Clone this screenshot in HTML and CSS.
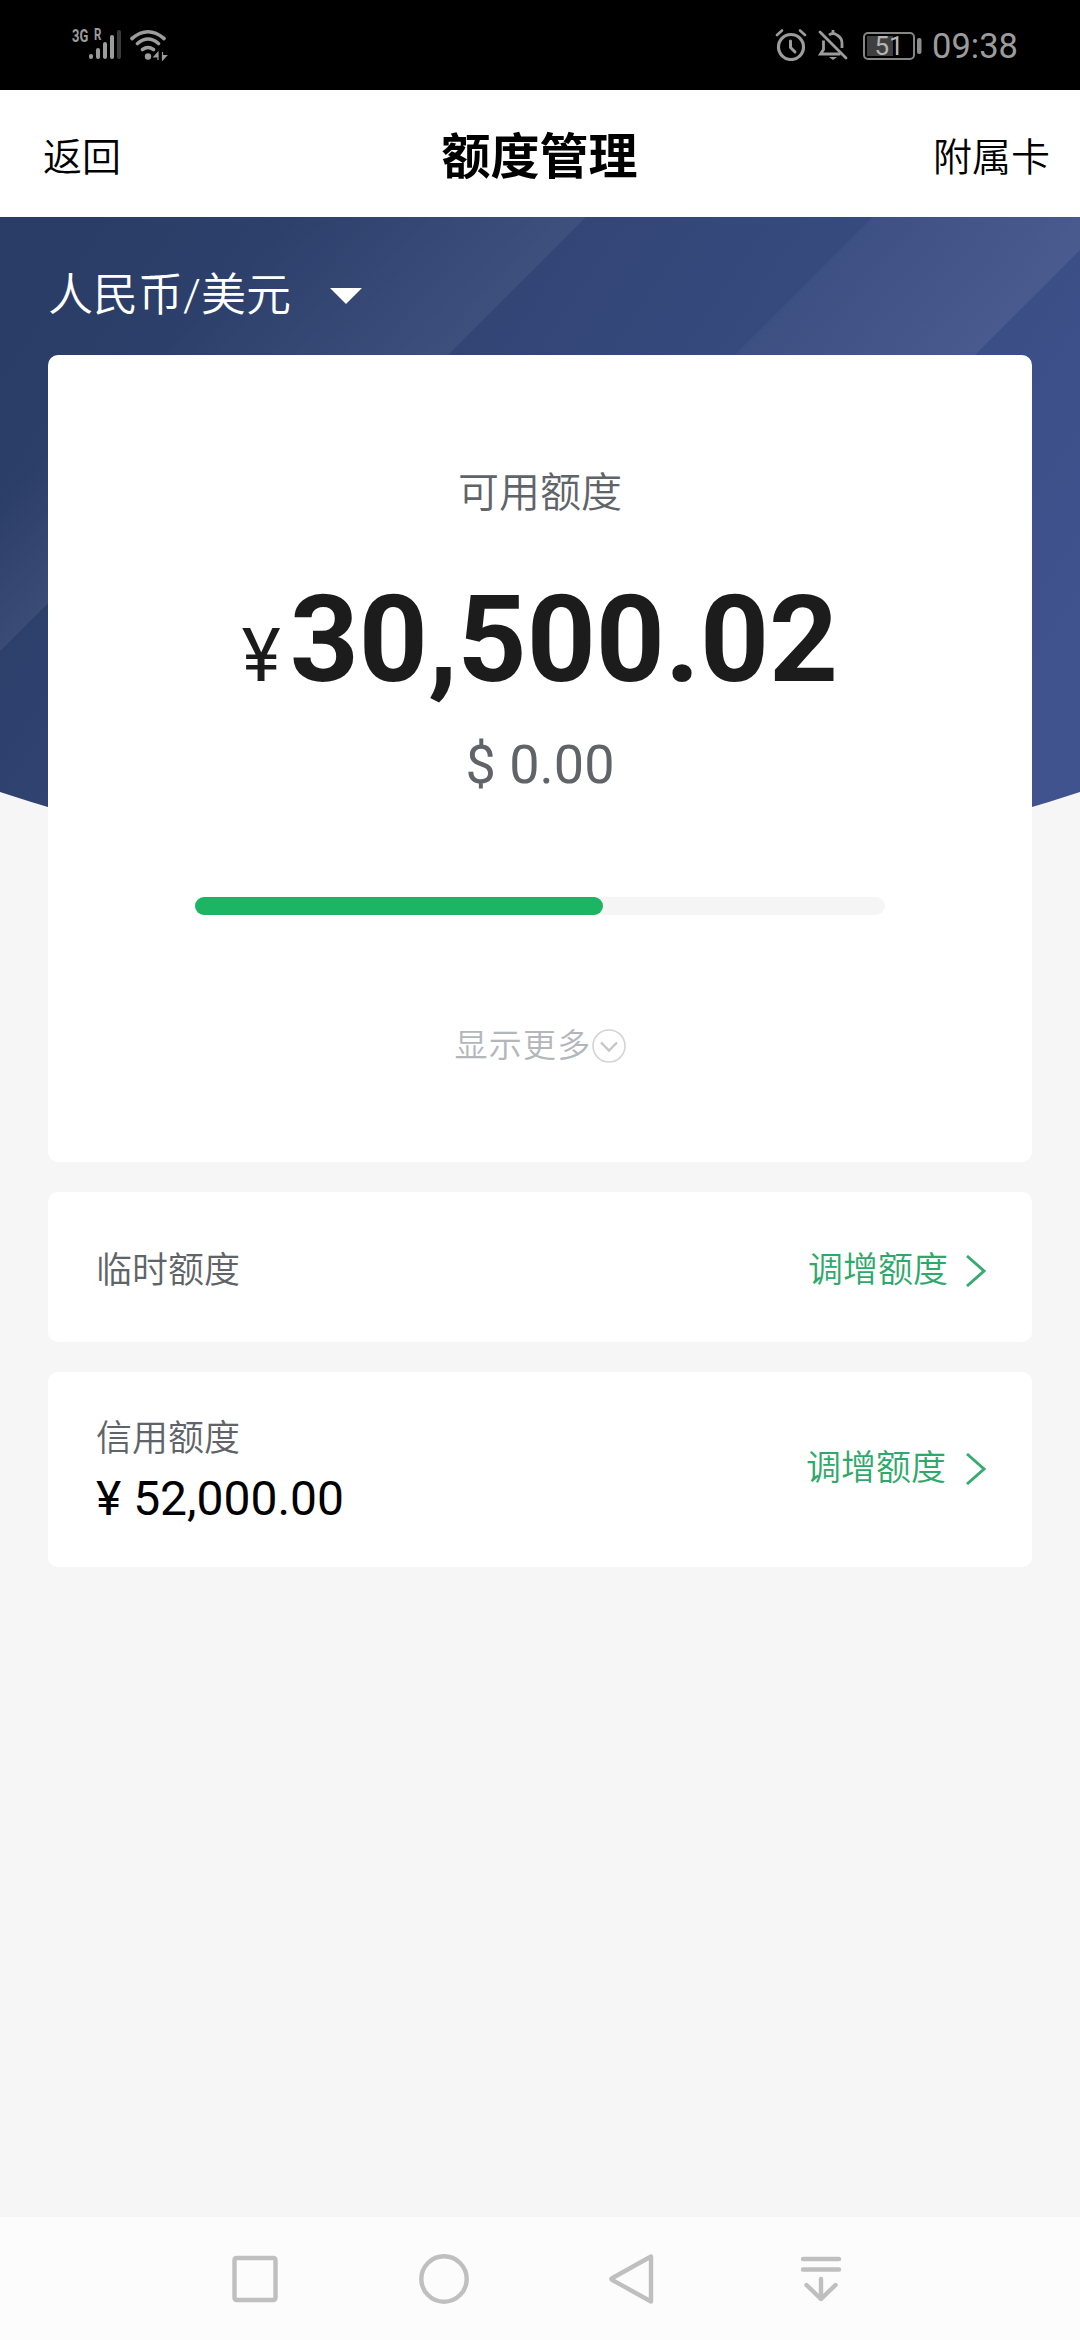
FILE: index.html
```html
<!DOCTYPE html>
<html lang="zh-CN">
<head>
<meta charset="utf-8">
<title>额度管理</title>
<link rel="stylesheet" href="styles.css">
</head>
<body>
<div class="status">
  <div class="status-left">
    <div class="net"><span>3G</span><span class="net-r">R</span></div>
    <svg class="bars" width="34" height="32" viewBox="16 0 34 32">
      <g stroke="#9c9c9c" stroke-width="4" stroke-linecap="round">
        <path d="M19 27v1M26 21v7M33 15v13M40 8v20"/>
        <path d="M47 3v25" stroke="#3a3a3a"/>
      </g>
    </svg>
    <svg class="wifi" width="38" height="32" viewBox="0 0 38 32">
      <g fill="none" stroke="#9c9c9c" stroke-width="3.6" stroke-linecap="round">
        <path d="M2 9.500Q18-4 34 9.500M7.500 14.500Q18 5.500 28.500 14.500M12.500 20.500Q18 16.500 23.500 20.500"/>
      </g>
      <circle cx="18" cy="27.500" r="3.200" fill="#9c9c9c"/>
      <path d="M28 23v8M28 23.500l-4 4.500h4zM32.500 23v8l4-4.500h-4z" fill="#9c9c9c" stroke="#9c9c9c" stroke-width="1.200"/>
    </svg>
  </div>
  <div class="status-right">
    <svg width="32" height="32" viewBox="0 0 32 32" fill="none" stroke="#9c9c9c" stroke-linecap="round">
      <circle cx="16" cy="18" r="12.500" stroke-width="3.200"/>
      <path d="M15.500 12v6.500l4.500 4.500" stroke-width="3"/>
      <path d="M2 6l5-4.500M30 6l-5-4.500" stroke-width="2.600"/>
    </svg>
    <svg class="bell" width="30" height="32" viewBox="0 0 30 32" fill="none" stroke="#9c9c9c" stroke-width="2.800">
      <path d="M2 3l26 26" stroke-linecap="round"/>
      <path d="M11 6q4-3 8 0q5 3 5 8v5M5.500 11.500v9l-3 4.500h20M15 1v3"/>
      <path d="M11 28h8l-4 3z" fill="#9c9c9c" stroke="none"/>
    </svg>
    <svg class="battery" width="59" height="28" viewBox="0 0 59 28">
      <rect x="1" y="1" width="50" height="26" rx="4" fill="none" stroke="#858585" stroke-width="2"/>
      <rect x="4" y="4" width="26" height="20" fill="#3f3f3f"/>
      <rect x="54" y="6" width="4.500" height="16" rx="2" fill="#8c8c8c"/>
      <text class="pct" x="11.500" y="22.500">51</text>
    </svg>
    <span class="clock">09:38</span>
  </div>
</div>
<header class="topbar">
  <span class="side">返回</span>
  <h1 class="title">额度管理</h1>
  <span class="side side-right">附属卡</span>
</header>
<main class="page">
  <svg class="hero" width="1080" height="660" viewBox="0 217 1080 660" preserveAspectRatio="none">
    <defs>
      <linearGradient id="base" gradientUnits="userSpaceOnUse" x1="100" y1="217" x2="980" y2="800"><stop offset="0" stop-color="#2a3d66"/><stop offset="1" stop-color="#40538f"/></linearGradient>
      <linearGradient id="b1" gradientUnits="userSpaceOnUse" x1="290" y1="217" x2="474" y2="401"><stop offset="0" stop-color="#fff" stop-opacity="0"/><stop offset="1" stop-color="#fff" stop-opacity=".07"/></linearGradient>
      <linearGradient id="b2" gradientUnits="userSpaceOnUse" x1="871" y1="217" x2="991" y2="337"><stop offset="0" stop-color="#fff" stop-opacity=".035"/><stop offset="1" stop-color="#fff" stop-opacity=".07"/></linearGradient>
      <linearGradient id="b3" gradientUnits="userSpaceOnUse" x1="-60" y1="560" x2="25" y2="645"><stop offset="0" stop-color="#fff" stop-opacity="0"/><stop offset="1" stop-color="#fff" stop-opacity=".07"/></linearGradient>
      <clipPath id="curve"><path d="M0 217H1080V792Q540 970 0 792Z"/></clipPath>
    </defs>
    <g clip-path="url(#curve)">
      <path d="M0 217h1080v660H0z" fill="url(#base)"/>
      <path d="M0 217H586L446 357H0z" fill="url(#b1)"/>
      <path d="M873 217h207v33L973 357H733z" fill="url(#b2)"/>
      <path d="M0 357h48v246L0 651z" fill="url(#b3)"/>
    </g>
  </svg>
  <div class="currency">
    <span>人民币/美元</span>
    <svg width="32" height="16" viewBox="0 0 32 16"><path d="M0 0h32L16 16z" fill="#fff"/></svg>
  </div>
  <section class="card summary">
    <div class="label">可用额度</div>
    <div class="amount"><span class="yen">¥</span><span class="num">30,500.02</span></div>
    <div class="usd">$ 0.00</div>
    <div class="track"><div class="fill" style="width:59.1%"></div></div>
    <div class="more"><span>显示更多</span>
      <svg width="34" height="34" viewBox="0 0 34 34" fill="none"><circle cx="17" cy="17" r="16" stroke="#d3d4d5" stroke-width="1.600"/><path d="M9 13.500l8 8 8-8" stroke="#c4c6c8" stroke-width="2.400"/></svg>
    </div>
  </section>
  <section class="card row temp">
    <span class="name">临时额度</span>
    <span class="action">调增额度<svg width="21" height="32" viewBox="0 0 21 32"><path d="M2 1l17 15L2 31" fill="none" stroke="#3aab70" stroke-width="2.900"/></svg></span>
  </section>
  <section class="card row credit">
    <div class="info"><span class="name">信用额度</span><span class="value">¥ 52,000.00</span></div>
    <span class="action">调增额度<svg width="21" height="32" viewBox="0 0 21 32"><path d="M2 1l17 15L2 31" fill="none" stroke="#3aab70" stroke-width="2.900"/></svg></span>
  </section>
</main>
<nav class="navbar">
  <svg width="54" height="54" viewBox="0 0 54 54"><rect x="6.500" y="6" width="41" height="42" rx="2"/></svg>
  <svg width="54" height="54" viewBox="0 0 54 54"><circle cx="27" cy="27" r="22.700"/></svg>
  <svg width="54" height="54" viewBox="0 0 54 54"><path d="M46 4.500v45L7 27.800q-1.500-.8 0-1.600z"/></svg>
  <svg width="54" height="54" viewBox="0 0 54 54"><path d="M9 7h36M9 17.500h36M27 27v20M12.500 33L27 47l14.500-14" stroke-linecap="round"/></svg>
</nav>
</body>
</html>
```

FILE: styles.css
```css
* { box-sizing: border-box; }
body {
  margin: 0;
  width: 1080px;
  height: 2340px;
  display: flex;
  flex-direction: column;
  background: #f6f6f6;
  font-family: Roboto, "Noto Sans CJK SC", sans-serif;
  font-weight: 400;
  overflow: hidden;
}
svg { display: block; flex: none; }
.status {
  height: 90px;
  background: #000;
  color: #9c9c9c;
  display: flex;
  justify-content: space-between;
  padding: 29px 66px 0 72px;
}
.status-left, .status-right { display: flex; }
.net {
  display: flex;
  gap: 8px;
  width: 40px;
  height: 22px;
  margin-top: -4px;
  font-size: 18px;
  line-height: 22px;
  font-weight: 700;
  transform: scaleX(.72);
  transform-origin: 0 0;
}
.net-r { font-size: 16px; line-height: 20px; }
.bars { margin-left: -24px; }
.wifi { margin-left: 8px; }
.bell { margin-left: 11px; }
.battery { margin: 3px 0 0 15px; }
.pct { font-size: 26px; fill: #b5b5b5; }
.clock { font-size: 34.500px; line-height: 35px; margin-left: 10px; width: 82px; white-space: nowrap; }
.topbar {
  height: 127px;
  background: #fff;
  display: grid;
  grid-template-columns: 1fr auto 1fr;
  align-items: center;
  padding: 8px 30px 0 43px;
  color: #000;
}
.title { margin: 0; font-size: 49px; line-height: 60px; font-weight: 700; position: relative; left: -7px; }
.side { font-size: 39px; line-height: 60px; font-weight: 350; }
.side-right { text-align: right; }
.page {
  flex: 1;
  position: relative;
  padding: 0 48px;
  display: flex;
  flex-direction: column;
  gap: 30px;
}
.hero { position: absolute; left: 0; top: 0; }
.currency {
  position: relative;
  height: 108px;
  padding-top: 49px;
  display: flex;
  align-items: center;
  gap: 39px;
  color: #fff;
  font-size: 45px;
  line-height: 60px;
  font-weight: 350;
}
.card { position: relative; background: #fff; border-radius: 10px; }
.summary {
  height: 807px;
  display: flex;
  flex-direction: column;
  align-items: center;
  padding-top: 108px;
}
.label { font-size: 41px; line-height: 60px; color: #5f6469; font-weight: 350; }
.amount { display: flex; align-items: baseline; gap: 9px; margin-top: 47px; color: #1c1c1c; line-height: 140px; }
.yen { font-size: 74px; }
.num { font-size: 120.500px; font-weight: 700; }
.usd { margin-top: 7px; font-size: 54px; line-height: 64px; color: #606468; }
.track { width: 690px; height: 18px; margin-top: 100px; border-radius: 9px; background: #f5f5f5; }
.fill { height: 18px; border-radius: 9px; background: #1cb564; }
.more { display: flex; align-items: center; margin-top: 103px; height: 50px; color: #b4b7ba; font-size: 33px; letter-spacing: 1.300px; font-weight: 350; }
.more svg { margin-top: 5px; }
.row { display: flex; justify-content: space-between; align-items: center; padding: 0 46px 0 48px; }
.temp { height: 150px; padding-top: 7px; }
.credit { height: 195px; }
.info { display: flex; flex-direction: column; padding-top: 3px; }
.name { font-size: 36px; line-height: 50px; color: #606468; font-weight: 350; }
.value { font-size: 48px; line-height: 60px; margin-top: 5px; color: #000; }
.action { display: flex; align-items: center; gap: 17px; font-size: 35px; color: #2fa96b; line-height: 50px; font-weight: 350; }
.credit .action { gap: 19px; padding-bottom: 1px; }
.navbar {
  height: 123px;
  background: #fcfcfc;
  display: flex;
  justify-content: center;
  align-items: center;
  gap: 134.500px;
  padding-right: 4px;
}
.navbar svg { fill: none; stroke: #bfbfbf; stroke-width: 4.400; stroke-linejoin: round; }
```
